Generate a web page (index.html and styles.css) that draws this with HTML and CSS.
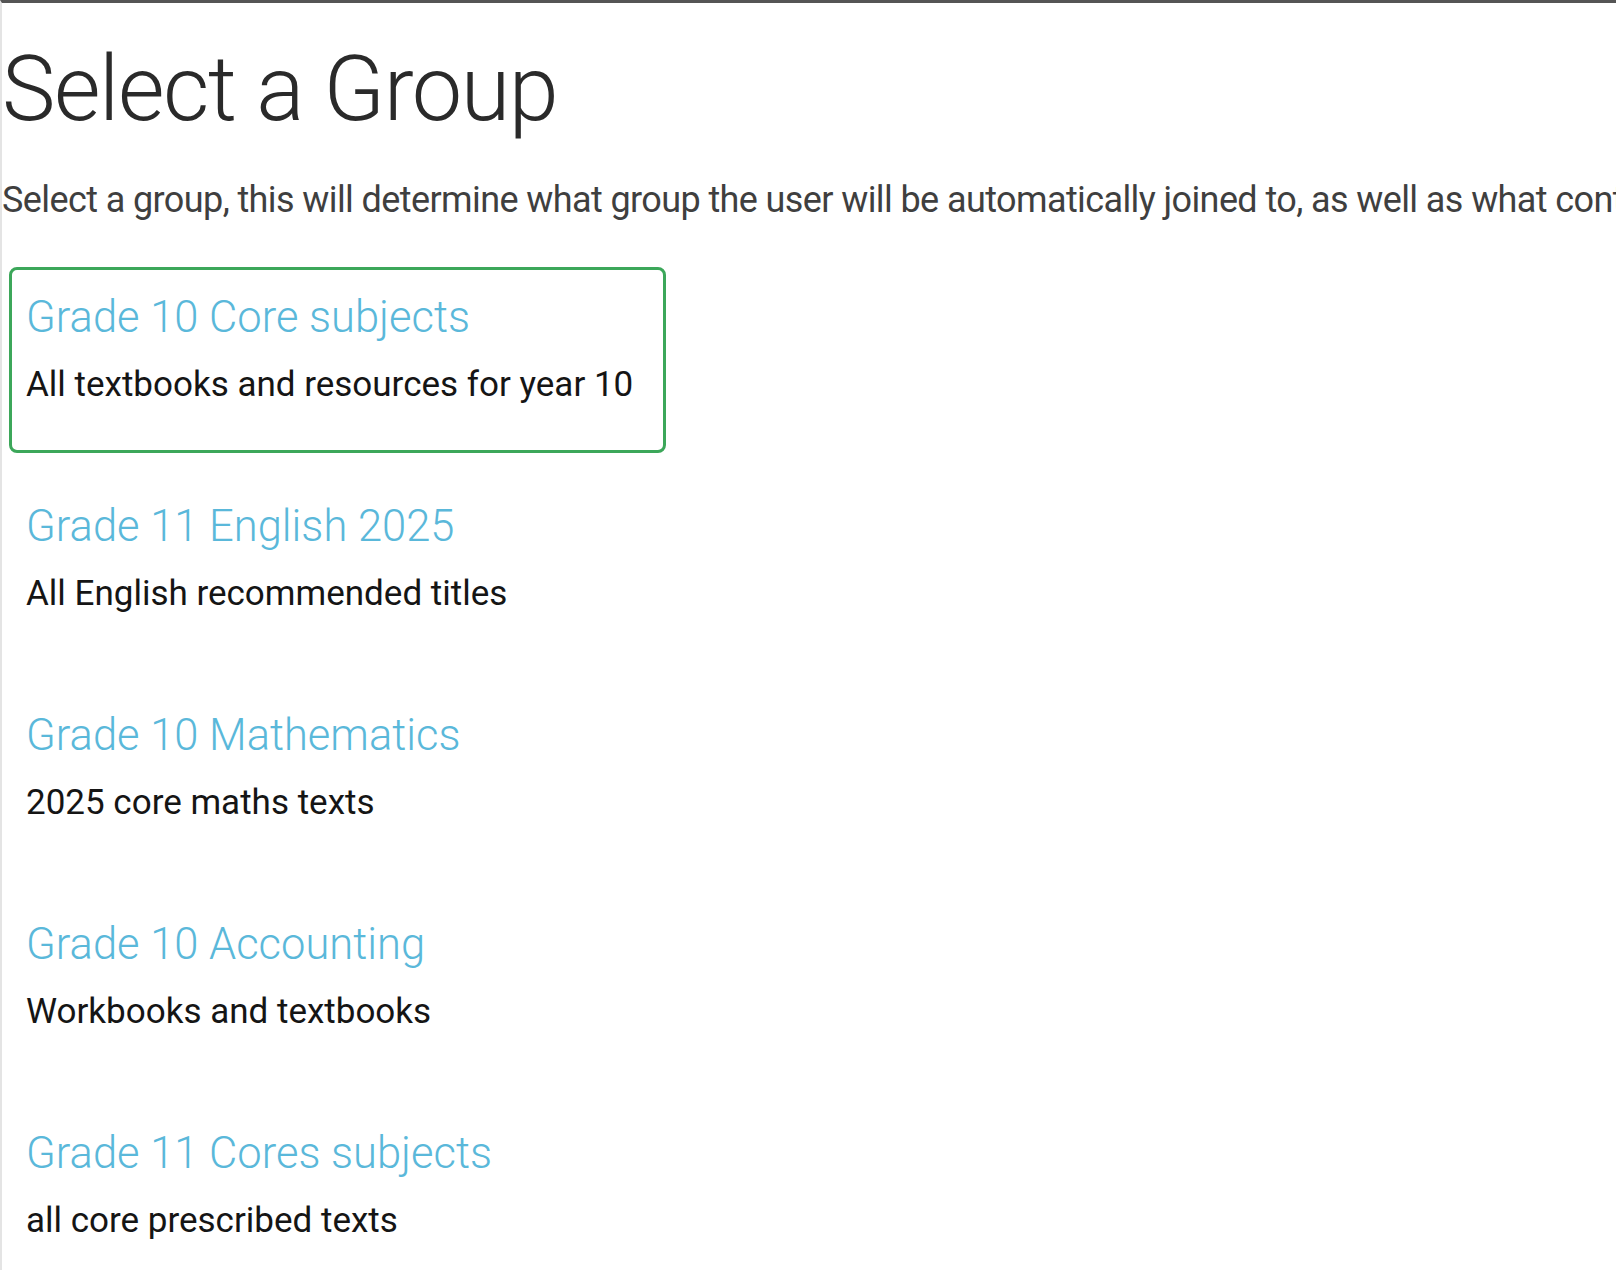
FILE: index.html
```html
<!DOCTYPE html>
<html lang="en">
<head>
<meta charset="utf-8">
<title>Select a Group</title>
<link rel="stylesheet" href="styles.css">
</head>
<body>
<div class="page">
  <h1 class="page-title">Select a Group</h1>
  <p class="page-intro">Select a group, this will determine what group the user will be automatically joined to, as well as what content they will have access to.</p>
  <ul class="group-list">
    <li class="group-item is-selected">
      <a class="group-name" href="#">Grade 10 Core subjects</a>
      <p class="group-desc">All textbooks and resources for year 10</p>
    </li>
    <li class="group-item">
      <a class="group-name" href="#">Grade 11 English 2025</a>
      <p class="group-desc">All English recommended titles</p>
    </li>
    <li class="group-item">
      <a class="group-name" href="#">Grade 10 Mathematics</a>
      <p class="group-desc">2025 core maths texts</p>
    </li>
    <li class="group-item">
      <a class="group-name" href="#">Grade 10 Accounting</a>
      <p class="group-desc">Workbooks and textbooks</p>
    </li>
    <li class="group-item">
      <a class="group-name" href="#">Grade 11 Cores subjects</a>
      <p class="group-desc">all core prescribed texts</p>
    </li>
  </ul>
</div>
</body>
</html>
```
FILE: styles.css
```css
html, body {
  margin: 0;
  padding: 0;
  background: #ffffff;
}

body {
  font-family: Roboto, "Liberation Sans", sans-serif;
  color: #222;
  overflow: hidden;
}

.page {
  min-height: 1270px;
  border-top: 3px solid #555555;
  border-left: 2px solid #e4e4e4;
  box-sizing: border-box;
  white-space: nowrap;
  overflow: hidden;
}

.page-title {
  margin: 0;
  padding-top: 37px;
  font-size: 90px;
  font-weight: 300;
  line-height: 99px;
  color: #2a2a2a;
  letter-spacing: -1.4px;
}

.page-intro {
  margin: 38px 0 0;
  font-size: 36px;
  line-height: 46.8px;
  color: #3f3f3f;
  letter-spacing: -0.6px;
}

.group-list {
  list-style: none;
  margin: 43px 0 0;
  padding: 0 0 0 7px;
}

.group-item {
  box-sizing: border-box;
  width: 657px;
  height: 186px;
  margin-bottom: 23px;
  padding: 22px 14px 0;
  border: 3px solid transparent;
  border-radius: 8px;
}

.group-item.is-selected {
  border-color: #3ca75a;
}

.group-name {
  display: block;
  font-size: 43.5px;
  font-weight: 300;
  line-height: 52px;
  color: #5ab8da;
  text-decoration: none;
}

.group-desc {
  margin: 20px 0 0;
  font-size: 35px;
  line-height: 42px;
  color: #151515;
}
```
